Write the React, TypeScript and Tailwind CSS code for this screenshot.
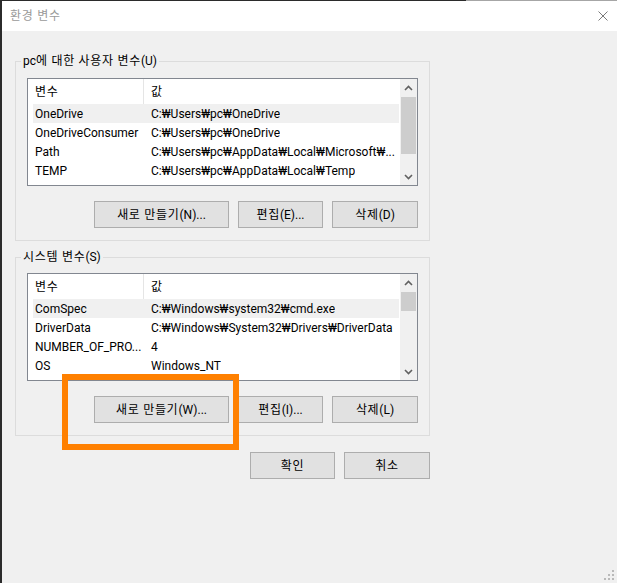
import React from 'react'

type Row = { name: string; value: string; selected?: boolean }

const userVars: Row[] = [
  { name: 'OneDrive', value: 'C:₩Users₩pc₩OneDrive', selected: true },
  { name: 'OneDriveConsumer', value: 'C:₩Users₩pc₩OneDrive' },
  { name: 'Path', value: 'C:₩Users₩pc₩AppData₩Local₩Microsoft₩...' },
  { name: 'TEMP', value: 'C:₩Users₩pc₩AppData₩Local₩Temp' },
]

const systemVars: Row[] = [
  { name: 'ComSpec', value: 'C:₩Windows₩system32₩cmd.exe', selected: true },
  { name: 'DriverData', value: 'C:₩Windows₩System32₩Drivers₩DriverData' },
  { name: 'NUMBER_OF_PRO...', value: '4' },
  { name: 'OS', value: 'Windows_NT' },
]

// hangul in the reference (Malgun Gothic) sits a bit wider than Noto CJK, so space it out a little
function K({ text }: { text: string }) {
  const parts = text.split(/([\uAC00-\uD7A3][\uAC00-\uD7A3 ]*)/).filter(Boolean)
  return (
    <>
      {parts.map((p, i) =>
        /[\uAC00-\uD7A3]/.test(p) ? (
          <span key={i} className="tracking-[0.7px]">
            {p}
          </span>
        ) : (
          <span key={i}>{p}</span>
        )
      )}
    </>
  )
}

function Chevron({ up }: { up?: boolean }) {
  return (
    <svg width="9" height="6" viewBox="0 0 9 6">
      <path
        d={up ? 'M1 5 L4.5 1.5 L8 5' : 'M1 1 L4.5 4.5 L8 1'}
        fill="none"
        stroke="#606060"
        strokeWidth="1.6"
      />
    </svg>
  )
}

function Button({ label, w }: { label: string; w: string }) {
  return (
    <div
      className={`${w} h-[27px] flex items-center justify-center border border-[#adadad] bg-[#e1e1e1] text-[12px] text-black whitespace-nowrap`}
    >
      <K text={label} />
    </div>
  )
}

function VarList({ rows, thumb }: { rows: Row[]; thumb: string }) {
  return (
    <div className="h-[108px] border border-[#828790] bg-white flex overflow-hidden">
      <div className="flex-1 flex flex-col overflow-hidden">
        <div className="h-[25px] flex items-center pl-[5px] shrink-0">
          <div className="w-[111px] h-full flex items-center pl-[2px] border-r border-[#e5e5e5]">
            <K text="변수" />
          </div>
          <div className="pl-[7px]">값</div>
        </div>
        {rows.map((r) => (
          <div
            key={r.name}
            className={`ml-[5px] h-[19px] shrink-0 flex items-center ${r.selected ? 'bg-[#f0f0f0]' : ''}`}
          >
            <div className="w-[111px] pl-[2px] whitespace-nowrap overflow-hidden">{r.name}</div>
            <div className="pl-[7px] whitespace-nowrap overflow-hidden">{r.value}</div>
          </div>
        ))}
      </div>
      <div className="w-[17px] ml-px bg-[#f0f0f0] flex flex-col">
        <div className="h-[17px] flex items-center justify-center">
          <Chevron up />
        </div>
        <div className="flex-1">
          <div className={`mt-px mx-px bg-[#cdcdcd] ${thumb}`} />
        </div>
        <div className="h-[17px] flex items-center justify-center">
          <Chevron />
        </div>
      </div>
    </div>
  )
}

export default function App() {
  return (
    <div className="relative w-[617px] h-[583px] overflow-hidden bg-[#f0f0f0] border-l-2 border-[#2b2b2b] font-['Roboto','Noto_Sans_CJK_KR',sans-serif] text-[12px] text-black flex flex-col">
      <div className="h-px flex shrink-0">
        <div className="w-[464px] bg-[#2b2b2b]" />
        <div className="flex-1 bg-[#a6a6a6]" />
      </div>
      <div className="h-[30px] bg-white flex items-center justify-between pl-[8px] pr-[9px] shrink-0">
        <span className="text-[#9a9a9a]">
          <K text="환경 변수" />
        </span>
        <svg width="10" height="10" viewBox="0 0 10 10">
          <path d="M0.5 0.5 L9.5 9.5 M9.5 0.5 L0.5 9.5" stroke="#7a7a7a" strokeWidth="1" />
        </svg>
      </div>

      <fieldset className="ml-[13px] mt-[22px] w-[415px] border border-[#dcdcdc]">
        <legend className="ml-[5px] px-[2px] leading-[16px]">
          <K text="pc에 대한 사용자 변수(U)" />
        </legend>
        <div className="px-[11px] pb-[12px]">
          <div className="mt-[9px]">
            <VarList rows={userVars} thumb="h-[57px]" />
          </div>
          <div className="mt-[15px] flex justify-end gap-[9px]">
            <Button label="새로 만들기(N)..." w="w-[135px]" />
            <Button label="편집(E)..." w="w-[85px]" />
            <Button label="삭제(D)" w="w-[86px]" />
          </div>
        </div>
      </fieldset>

      <fieldset className="ml-[13px] mt-[8px] w-[415px] border border-[#dcdcdc]">
        <legend className="ml-[5px] px-[2px] leading-[16px]">
          <K text="시스템 변수(S)" />
        </legend>
        <div className="px-[11px] pb-[12px]">
          <div className="mt-[8px]">
            <VarList rows={systemVars} thumb="h-[19px]" />
          </div>
          <div className="mt-[15px] flex justify-end gap-[9px]">
            <Button label="새로 만들기(W)..." w="w-[135px]" />
            <Button label="편집(I)..." w="w-[85px]" />
            <Button label="삭제(L)" w="w-[86px]" />
          </div>
        </div>
      </fieldset>

      <div className="ml-[13px] mt-[16px] w-[415px] flex justify-end gap-[9px]">
        <Button label="확인" w="w-[85px]" />
        <Button label="취소" w="w-[86px]" />
      </div>

      <div className="absolute left-[60px] top-[374px] w-[177px] h-[76px] border-[6px] border-[#ff8000]" />

      <svg className="absolute right-[2px] bottom-[2px]" width="11" height="11" viewBox="0 0 11 11">
        <rect x="8" y="0" width="2" height="2" fill="#b9b9b9" />
        <rect x="4" y="4" width="2" height="2" fill="#b9b9b9" />
        <rect x="8" y="4" width="2" height="2" fill="#b9b9b9" />
        <rect x="0" y="8" width="2" height="2" fill="#b9b9b9" />
        <rect x="4" y="8" width="2" height="2" fill="#b9b9b9" />
        <rect x="8" y="8" width="2" height="2" fill="#b9b9b9" />
      </svg>
    </div>
  )
}
